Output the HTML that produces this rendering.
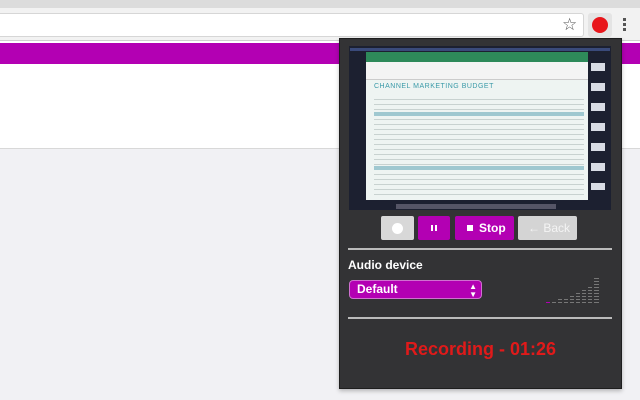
<!DOCTYPE html>
<html><head><style>
*{margin:0;padding:0;box-sizing:border-box}
body{width:640px;height:400px;overflow:hidden;background:#f1f1f4;font-family:"Liberation Sans",sans-serif;position:relative}
.abs{position:absolute}
</style></head><body>
<div class="abs" style="left:0;top:0;width:640px;height:40px;background:#f2f2f2"></div>
<div class="abs" style="left:0;top:0;width:640px;height:8px;background:#dcdcdc"></div>
<div class="abs" style="left:0;top:13px;width:584px;height:24px;background:#fff;border:1px solid #d6d6d6;border-left:none;border-radius:0 3px 3px 0"></div>
<div class="abs" style="left:562px;top:15px;font-size:17px;color:#555">☆</div>
<div class="abs" style="left:588px;top:13px;width:24px;height:24px;background:#e4e4e4;border-radius:3px"></div>
<div class="abs" style="left:592px;top:17px;width:16px;height:16px;background:#e8161b;border-radius:50%"></div>
<div class="abs" style="left:623px;top:18px;width:3px;height:3px;background:#555;box-shadow:0 5px #555,0 10px #555"></div>
<div class="abs" style="left:0;top:40px;width:640px;height:1px;background:#cfcfcf"></div>
<div class="abs" style="left:0;top:41px;width:640px;height:108px;background:#fff"></div>
<div class="abs" style="left:0;top:43px;width:640px;height:21px;background:#b300b3"></div>
<div class="abs" style="left:0;top:148px;width:640px;height:1px;background:#d8d8d8"></div>
<!-- popup -->
<div class="abs" style="left:339px;top:38px;width:283px;height:351px;background:#333335;border:1px solid #1e1e1e;box-shadow:0 2px 4px rgba(0,0,0,.25)"></div>
<div class="abs" style="left:349px;top:46px;width:262px;height:164px;background:#1c2030"></div>
<div class="abs" style="left:350px;top:48px;width:260px;height:3px;background:#3a4a7a"></div>
<div class="abs" style="left:366px;top:52px;width:222px;height:148px;background:#eef4f2"></div>
<div class="abs" style="left:366px;top:52px;width:222px;height:10px;background:#2e8a5a"></div>
<div class="abs" style="left:366px;top:62px;width:222px;height:18px;background:#f4f4f4;border-bottom:1px solid #ccc"></div>
<div class="abs" style="left:374px;top:83px;font-size:7px;color:#3a9aa8;letter-spacing:.5px">CHANNEL MARKETING BUDGET</div>
<div class="abs" style="left:374px;top:95px;width:210px;height:100px;background:repeating-linear-gradient(#eef4f2 0 4px,#c8d2d0 4px 5px)"></div>
<div class="abs" style="left:374px;top:112px;width:210px;height:4px;background:#9fc8d0"></div>
<div class="abs" style="left:374px;top:166px;width:210px;height:4px;background:#9fc8d0"></div>
<div class="abs" style="left:396px;top:204px;width:160px;height:5px;background:#556"></div>
<div class="abs" style="left:591px;top:55px;width:14px;height:135px;background:repeating-linear-gradient(#1c2030 0 8px,#d8dce4 8px 16px,#1c2030 16px 20px)"></div>
<!-- buttons -->
<div class="abs" style="left:381px;top:216px;width:33px;height:24px;background:#d8d8d8;border-radius:2px"></div>
<div class="abs" style="left:392px;top:223px;width:11px;height:11px;background:#fff;border-radius:50%"></div>
<div class="abs" style="left:418px;top:216px;width:32px;height:24px;background:#b300b3;border-radius:2px"></div>
<div class="abs" style="left:431px;top:225px;width:2px;height:6px;background:#fff;box-shadow:4px 0 #fff"></div>
<div class="abs" style="left:455px;top:216px;width:59px;height:24px;background:#b300b3;border-radius:2px;color:#fff;font-size:12px;font-weight:bold;line-height:24px;padding-left:12px"><span style="display:inline-block;width:6px;height:6px;background:#fff;margin-right:6px;vertical-align:1px"></span>Stop</div>
<div class="abs" style="left:518px;top:216px;width:59px;height:24px;background:#d4d4d4;border-radius:2px;color:#f4f4f4;font-size:12px;line-height:24px;padding-left:10px">← Back</div>
<div class="abs" style="left:348px;top:248px;width:264px;height:2px;background:#bbb"></div>
<div class="abs" style="left:348px;top:258px;color:#fff;font-size:12px;font-weight:bold">Audio device</div>
<div class="abs" style="left:349px;top:280px;width:133px;height:19px;background:#b300b3;border:1px solid #d070d0;border-radius:4px;color:#fff;font-size:12px;font-weight:bold;line-height:17px;padding-left:7px">Default<span style="position:absolute;right:4px;top:2px;font-size:8px;line-height:8px">▲<br>▼</span></div>
<svg class="abs" style="left:544px;top:276px" width="58" height="30" id="m">
<g fill="#777">
<rect x="8" y="26" width="4" height="1"/>
<rect x="14" y="23" width="4" height="1"/><rect x="14" y="26" width="4" height="1"/>
<rect x="20" y="23" width="4" height="1"/><rect x="20" y="26" width="4" height="1"/>
<rect x="26" y="20" width="4" height="1"/><rect x="26" y="23" width="4" height="1"/><rect x="26" y="26" width="4" height="1"/>
<rect x="32" y="17" width="4" height="1"/><rect x="32" y="20" width="4" height="1"/><rect x="32" y="23" width="4" height="1"/><rect x="32" y="26" width="4" height="1"/>
<rect x="38" y="14" width="4" height="1"/><rect x="38" y="17" width="4" height="1"/><rect x="38" y="20" width="4" height="1"/><rect x="38" y="23" width="4" height="1"/><rect x="38" y="26" width="4" height="1"/>
<rect x="44" y="11" width="4" height="1"/><rect x="44" y="14" width="4" height="1"/><rect x="44" y="17" width="4" height="1"/><rect x="44" y="20" width="4" height="1"/><rect x="44" y="23" width="4" height="1"/><rect x="44" y="26" width="4" height="1"/>
<rect x="50" y="2" width="5" height="1"/><rect x="50" y="5" width="5" height="1"/><rect x="50" y="8" width="5" height="1"/><rect x="50" y="11" width="5" height="1"/><rect x="50" y="14" width="5" height="1"/><rect x="50" y="17" width="5" height="1"/><rect x="50" y="20" width="5" height="1"/><rect x="50" y="23" width="5" height="1"/><rect x="50" y="26" width="5" height="1"/>
</g><rect x="2" y="26" width="4" height="1" fill="#b300b3"/></svg>
<div class="abs" style="left:348px;top:317px;width:264px;height:2px;background:#bbb"></div>
<div class="abs" style="left:340px;top:339px;width:281px;text-align:center;color:#e01a1a;font-size:18px;font-weight:bold">Recording - 01:26</div>
</body></html>
